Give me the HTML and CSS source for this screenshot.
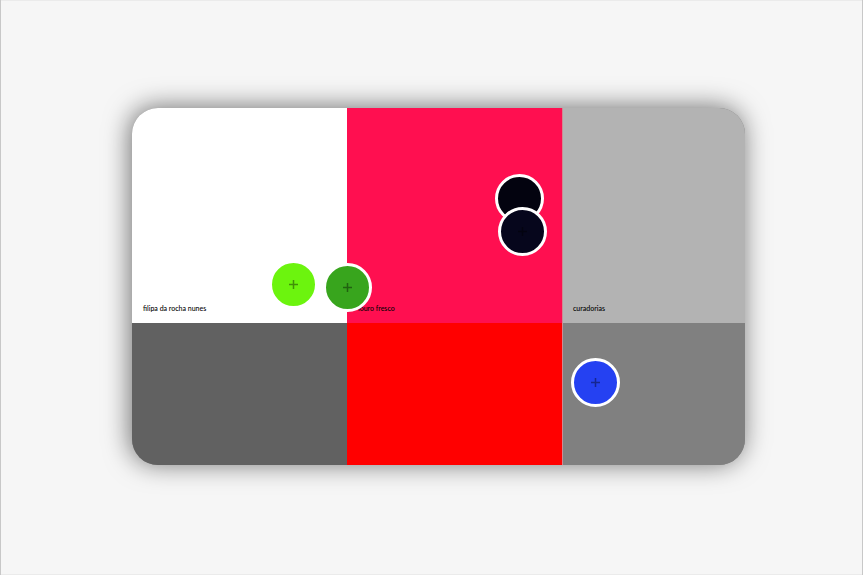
FILE: index.html
```html
<!DOCTYPE html>
<html lang="pt">
<head>
<meta charset="utf-8">
<meta name="viewport" content="width=device-width, initial-scale=1">
<title>curadorias</title>
<link rel="stylesheet" href="styles.css">
</head>
<body>
<main class="board">
  <section class="tile white"><a href="#filipa">filipa da rocha nunes</a></section>
  <section class="tile pink"><a href="#louro">louro fresco</a></section>
  <section class="tile silver"><a href="#curadorias">curadorias</a></section>
  <section class="tile dark"></section>
  <section class="tile red"></section>
  <section class="tile gray"></section>
  <button class="dot lime" aria-label="Lime"><svg viewBox="0 0 9 9"><path d="M4.5 0v9M0 4.5h9"/></svg></button>
  <button class="dot green" aria-label="Green"><svg viewBox="0 0 9 9"><path d="M4.5 0v9M0 4.5h9"/></svg></button>
  <button class="dot black" aria-label="Black"></button>
  <button class="dot navy" aria-label="Navy"><svg viewBox="0 0 9 9"><path d="M4.5 0v9M0 4.5h9"/></svg></button>
  <button class="dot blue" aria-label="Blue"><svg viewBox="0 0 9 9"><path d="M4.5 0v9M0 4.5h9"/></svg></button>
</main>
</body>
</html>
```
FILE: styles.css
```css
* {
  box-sizing: border-box;
}

body {
  display: flex;
  min-height: 100vh;
  margin: 0;
  padding: 108px 117px 110px 131px;
  background: #f6f6f6;
  border: solid #c8c8c8;
  border-width: 0 1px;
  box-shadow: inset 0 1px #ebebeb, inset 0 -1px #ebebeb;
  font-family: Lato, "Liberation Sans", sans-serif;
}

.board {
  position: relative;
  display: grid;
  flex: 1;
  grid-template-columns: 215fr 215fr 183fr;
  grid-template-rows: 215fr 142fr;
  border-radius: 26px;
  background: #808080;
  box-shadow: -2px -1px 26px rgba(0, 0, 0, 0.55);
}

.tile {
  display: flex;
  align-items: flex-end;
  padding: 10px 11px;
}

.tile a {
  color: #000;
  font-size: 7px;
  font-weight: 500;
  line-height: 10px;
  text-decoration: none;
  white-space: nowrap;
}

.white {
  background: #fff;
  border-top-left-radius: 26px;
}

.pink {
  background: #ff0f50;
}

.silver {
  background: #b3b3b3;
  border-top-right-radius: 26px;
}

.dark {
  background: #616161;
  border-bottom-left-radius: 26px;
}

.red {
  background: #f00;
}

.gray {
  background: #808080;
  border-bottom-right-radius: 26px;
}

.silver,
.gray {
  border-left: 1px solid #d08a92;
  padding-left: 10px;
}

.dot {
  position: absolute;
  display: flex;
  align-items: center;
  justify-content: center;
  width: 49px;
  height: 49px;
  padding: 0;
  border: 3px solid #fff;
  border-radius: 50%;
}

.dot svg {
  width: 9px;
  height: 9px;
  fill: none;
  stroke: #000;
  stroke-width: 1.5;
  opacity: 0.4;
}

.lime {
  left: 137px;
  top: 152px;
  background: #6cf40e;
}

.green {
  left: 191px;
  top: 155px;
  background: #38a51d;
}

.black {
  left: 363px;
  top: 66px;
  background: #03030f;
}

.navy {
  left: 366px;
  top: 99px;
  background: #06061c;
}

.blue {
  left: 439px;
  top: 250px;
  background: #2541f2;
}
```
